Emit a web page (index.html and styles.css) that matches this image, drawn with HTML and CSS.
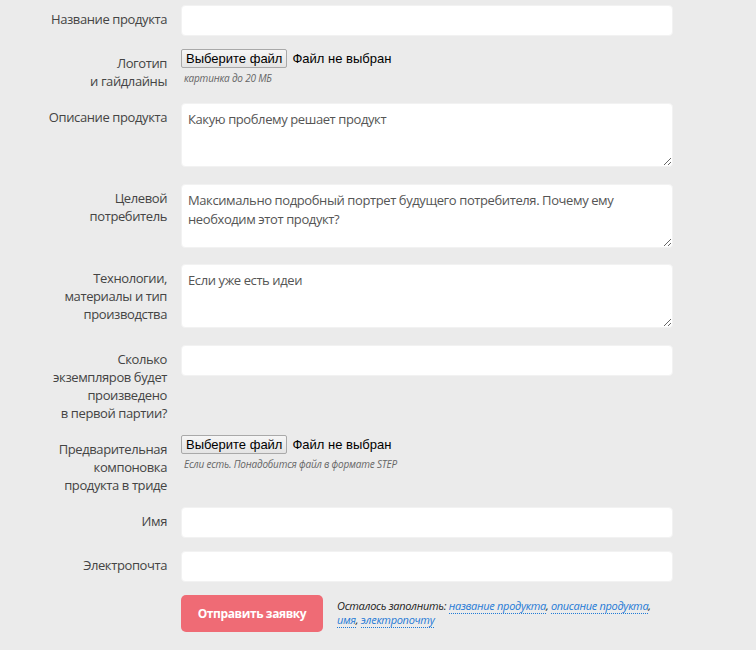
FILE: index.html
```html
<!DOCTYPE html>
<html lang="ru">
<head>
<meta charset="utf-8">
<title>Заявка</title>
<link rel="stylesheet" href="styles.css">
</head>
<body>
<form class="form">
  <div class="row">
    <label class="label">Название продукта</label>
    <div class="field"><input class="input" type="text"></div>
  </div>
  <div class="row">
    <label class="label">Логотип<br>и гайдлайны</label>
    <div class="field">
      <div class="file"><span class="file-btn">Выберите файл</span><span class="file-name">Файл не выбран</span></div>
      <div class="hint">картинка до 20 МБ</div>
    </div>
  </div>
  <div class="row">
    <label class="label">Описание продукта</label>
    <div class="field"><textarea class="textarea" placeholder="Какую проблему решает продукт"></textarea></div>
  </div>
  <div class="row">
    <label class="label">Целевой<br>потребитель</label>
    <div class="field"><textarea class="textarea" placeholder="Максимально подробный портрет будущего потребителя. Почему ему необходим этот продукт?"></textarea></div>
  </div>
  <div class="row">
    <label class="label">Технологии,<br>материалы и тип<br>производства</label>
    <div class="field"><textarea class="textarea" placeholder="Если уже есть идеи"></textarea></div>
  </div>
  <div class="row">
    <label class="label">Сколько<br>экземпляров будет<br>произведено<br>в первой партии?</label>
    <div class="field"><input class="input" type="text"></div>
  </div>
  <div class="row">
    <label class="label">Предварительная<br>компоновка<br>продукта в триде</label>
    <div class="field">
      <div class="file"><span class="file-btn">Выберите файл</span><span class="file-name">Файл не выбран</span></div>
      <div class="hint">Если есть. Понадобится файл в формате STEP</div>
    </div>
  </div>
  <div class="row">
    <label class="label">Имя</label>
    <div class="field"><input class="input" type="text"></div>
  </div>
  <div class="row">
    <label class="label">Электропочта</label>
    <div class="field"><input class="input" type="text"></div>
  </div>
  <div class="row submit-row">
    <div></div>
    <div class="submit">
      <button class="send" type="button">Отправить заявку</button>
      <p class="remain">Осталось заполнить: <a href="#">название продукта</a>, <a href="#">описание продукта</a>, <a href="#">имя</a>, <a href="#">электропочту</a></p>
    </div>
  </div>
</form>
</body>
</html>
```

FILE: styles.css
```css
html, body {
  margin: 0;
  padding: 0;
  background: #ebebeb;
}
body {
  font-family: "Open Sans", "Noto Sans", sans-serif;
  font-size: 13px;
  letter-spacing: -0.4px;
  color: #444;
}
.form {
  padding-top: 5px;
}
.row {
  display: grid;
  grid-template-columns: 167px 492px;
  column-gap: 14px;
  margin-bottom: 13px;
}
.label {
  text-align: right;
  line-height: 18px;
  padding-top: 5px;
  color: #444;
}
.field {
  min-width: 0;
}
.input {
  display: block;
  box-sizing: border-box;
  width: 492px;
  height: 31px;
  margin: 0;
  border: 1px solid #f2f2f2;
  border-radius: 4px;
  background: #fff;
  font-family: inherit;
  font-size: 13px;
  padding: 0 6px;
  outline: none;
}
.textarea {
  display: block;
  box-sizing: border-box;
  width: 492px;
  height: 64px;
  margin: 0 0 3.5px;
  border: 1px solid #f2f2f2;
  border-radius: 4px;
  background: #fff;
  font-family: inherit;
  font-size: 13px;
  letter-spacing: -0.4px;
  line-height: 19px;
  color: #444;
  padding: 6px 6px;
  resize: vertical;
  outline: none;
}
.textarea::placeholder {
  color: #555;
  opacity: 1;
}
.file {
  display: flex;
  align-items: center;
  height: 19px;
  font-family: "Liberation Sans", Arial, sans-serif;
  font-size: 13px;
  letter-spacing: 0;
  color: #000;
}
.file-btn {
  box-sizing: border-box;
  height: 19px;
  line-height: 17px;
  padding: 0 4px;
  border: 1px solid #a9a9a9;
  border-radius: 2px;
  background: linear-gradient(#f6f6f6, #e4e4e4);
  color: #000;
}
.file-name {
  margin-left: 5px;
}
.hint {
  margin-top: 3px;
  padding-left: 3px;
  font-size: 10px;
  font-style: italic;
  color: #666;
  line-height: 14px;
  letter-spacing: -0.2px;
}
.submit {
  display: flex;
  align-items: center;
  gap: 14px;
}
.send {
  flex: none;
  width: 142px;
  height: 37px;
  border: 0;
  border-radius: 5px;
  background: #ef6b75;
  color: #fff;
  font-family: inherit;
  font-size: 12px;
  letter-spacing: -0.4px;
  font-weight: 700;
  padding: 0;
}
.remain {
  margin: 0;
  max-width: 330px;
  font-size: 11px;
  line-height: 14px;
  font-style: italic;
  color: #222;
  letter-spacing: -0.3px;
}
.remain a {
  color: #1f7ad6;
  text-decoration: none;
  border-bottom: 1px dotted #1f7ad6;
}
```
